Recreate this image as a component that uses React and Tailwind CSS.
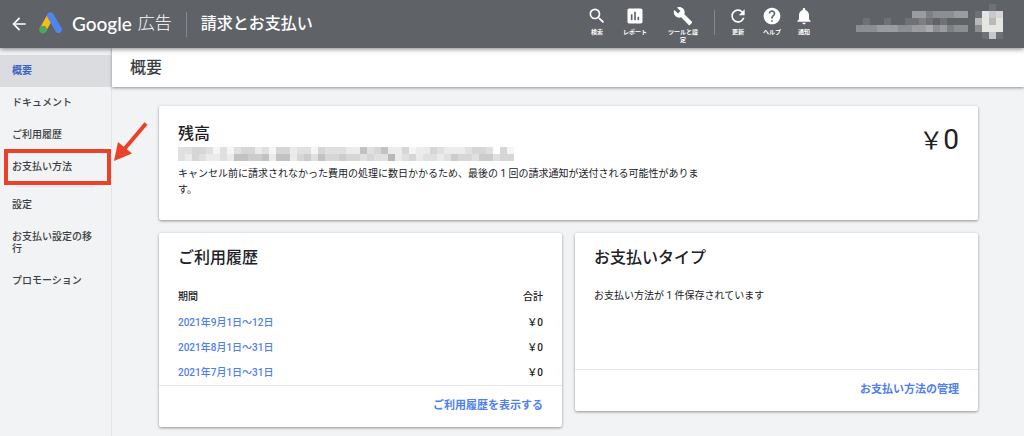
import {
  MdArrowBack,
  MdAssessment,
  MdBuild,
  MdHelp,
  MdNotifications,
  MdRefresh,
  MdSearch,
} from 'react-icons/md';

const tools = [
  { label: '検索', icon: MdSearch, width: 'w-9' },
  { label: 'レポート', icon: MdAssessment, width: 'w-10' },
  { label: 'ツールと設定', icon: MdBuild, width: 'w-14' },
];

const actions = [
  { label: '更新', icon: MdRefresh, width: 'w-9' },
  { label: 'ヘルプ', icon: MdHelp, width: 'w-8' },
  { label: '通知', icon: MdNotifications, width: 'w-8' },
];

// Full-width yen sign
const YEN = '\uffe5';

const history = [
  { period: '2021年9月1日〜12日', total: '0' },
  { period: '2021年8月1日〜31日', total: '0' },
  { period: '2021年7月1日〜31日', total: '0' },
];

// Each digit is the strength of one 7px cell of a masked text
const maskedAccount = [
  '334431313442314423314333226346224122432223443041',
  '324322326655626624536445443433723423323544355344',
];

const maskedUser = [
  '0000000000000000000100',
  '0000000044233344019780',
  '0100100112101000069690',
  '3334443344534233039990',
  '0000000000000000001710',
];

function AdsLogo() {
  return (
    <svg className="h-6 w-6" viewBox="0 0 24 24" aria-hidden="true">
      <path d="M3.9 17.6 11 5" stroke="#f9bc15" strokeWidth="7" />
      <path d="M11.4 3.8 19.4 17.5" stroke="#4f86ee" strokeWidth="6.8" strokeLinecap="round" />
      <circle cx="4" cy="17.6" r="3.8" fill="#4fa65a" />
    </svg>
  );
}

function Mosaic({ rows, color, strength, label }) {
  const width = rows[0].length * 7;
  const height = rows.length * 7;
  return (
    <svg width={width} height={height} role="img" aria-label={label} shapeRendering="crispEdges">
      {rows.map((row, y) =>
        [...row].map((level, x) => (
          <rect
            key={`${x}-${y}`}
            x={x * 7}
            y={y * 7}
            width="7"
            height="7"
            fill={color}
            fillOpacity={level * strength}
          />
        ))
      )}
    </svg>
  );
}

function ToolButton({ label, icon: Icon, width }) {
  return (
    <button type="button" className={`${width} flex flex-col items-center`}>
      <Icon className="h-5 w-5" />
      <span className="mt-0.5 w-8 text-center text-[6px] leading-[8px] font-bold">{label}</span>
    </button>
  );
}

function NavItem({ active, children }) {
  return (
    <a
      href="#"
      className={
        active
          ? 'block bg-[#dadce0] px-3 py-[10px] text-[10px] leading-3 font-bold text-[#3c66c4]'
          : 'block px-3 py-[10px] text-[10px] leading-3 font-medium text-[#3c4043]'
      }
    >
      {children}
    </a>
  );
}

function Card({ className = '', children }) {
  return (
    <section className={`rounded-xs bg-white shadow-[0_1px_3px_rgba(0,0,0,0.4)] ${className}`}>
      {children}
    </section>
  );
}

function CardFooter({ children }) {
  return (
    <div className="flex h-[42px] items-center justify-end border-t border-[#e4e6e9] px-[19px]">
      <a href="#" className="text-[11px] font-bold text-[#4f80ee]">
        {children}
      </a>
    </div>
  );
}

export default function App() {
  return (
    <div className="flex min-h-screen flex-col bg-[#f1f3f4] font-[Roboto,'Noto_Sans_CJK_JP',sans-serif] text-[#202124]">
      <header className="relative z-10 flex h-12 items-center bg-[#5f6368] text-white shadow-[0_1px_5px_rgba(0,0,0,0.5)]">
        <button type="button" aria-label="戻る" className="ml-[9px]">
          <MdArrowBack className="h-5 w-5" />
        </button>
        <div className="ml-[10px] flex items-center">
          <AdsLogo />
          <span className="ml-[9px] font-[Lato,sans-serif] text-[19px] font-medium">Google</span>
          <span className="ml-[6px] text-[17px] font-light">広告</span>
        </div>
        <div className="ml-[14px] h-[25px] w-px bg-[#85898d]" />
        <h1 className="ml-[14px] text-base font-medium">請求とお支払い</h1>

        <div className="ml-auto flex h-full items-start pt-[6px]">
          <div className="flex">
            {tools.map((tool) => (
              <ToolButton key={tool.label} {...tool} />
            ))}
          </div>
          <div className="mt-1 ml-[3px] h-[25px] w-px bg-[#85898d]" />
          <div className="ml-[5px] flex">
            {actions.map((action) => (
              <ToolButton key={action.label} {...action} />
            ))}
          </div>
        </div>
        <div className="mt-1 mr-[14px] ml-9 self-start">
          <Mosaic rows={maskedUser} color="#f4f3f0" strength={0.1} label="アカウント" />
        </div>
      </header>

      <div className="flex flex-1">
        <nav className="w-28 shrink-0 border-r border-[#e2e4e7] pt-[7px]">
          <NavItem active>概要</NavItem>
          <NavItem>ドキュメント</NavItem>
          <NavItem>ご利用履歴</NavItem>
          <div className="relative">
            <NavItem>お支払い方法</NavItem>
            <div className="pointer-events-none absolute -top-0.5 right-0 -bottom-0.5 left-1 border-4 border-[#ea4228]" />
            <svg
              className="pointer-events-none absolute -top-8 left-full h-11 w-10"
              viewBox="112 118 40 44"
              aria-hidden="true"
            >
              <path d="M147 122.5 125 148.5" stroke="#ea4228" strokeWidth="4" />
              <path d="M115 160 119 141 133 152.5Z" fill="#ea4228" />
            </svg>
          </div>
          <hr className="mx-4 mt-[3px] mb-[2px] border-[#dfe1e4]" />
          <NavItem>設定</NavItem>
          <NavItem>お支払い設定の移行</NavItem>
          <NavItem>プロモーション</NavItem>
        </nav>

        <main className="min-w-0 flex-1">
          <div className="flex h-[39px] items-center bg-white px-[18px] shadow-[0_1px_3px_rgba(0,0,0,0.4)]">
            <h2 className="text-base font-medium text-[#3c4043]">概要</h2>
          </div>

          <div className="pt-[19px] pr-[46px] pl-[47px]">
            <Card className="flex items-start justify-between px-[19px] pt-4 pb-[22px]">
              <div>
                <h3 className="text-base leading-6 font-medium">残高</h3>
                <div className="mt-px flex h-[14px]">
                  <Mosaic rows={maskedAccount} color="#000000" strength={0.04} label="請求先アカウント" />
                </div>
                <p className="mt-[5px] max-w-[530px] text-[10px] leading-4">
                  キャンセル前に請求されなかった費用の処理に数日かかるため、最後の 1 回の請求通知が送付される可能性があります。
                </p>
              </div>
              <p className="text-[28px] leading-9">
                <span className="text-[24px]">{YEN}</span>0
              </p>
            </Card>

            <div className="mt-[13px] grid grid-cols-2 items-start gap-[13px]">
              <Card>
                <h3 className="px-[19px] pt-[13px] text-base leading-6 font-medium">ご利用履歴</h3>
                <table className="mt-[14px] w-full text-[10px] leading-3 font-medium">
                  <thead>
                    <tr className="h-[26px]">
                      <th className="pl-[19px] text-left font-medium">期間</th>
                      <th className="pr-[19px] text-right font-medium">合計</th>
                    </tr>
                  </thead>
                  <tbody>
                    {history.map((row) => (
                      <tr key={row.period} className="h-[25px]">
                        <td className="pl-[19px]">
                          <a href="#" className="text-[#4f80ee]">
                            {row.period}
                          </a>
                        </td>
                        <td className="pr-[19px] text-right">
                          {YEN}
                          {row.total}
                        </td>
                      </tr>
                    ))}
                  </tbody>
                </table>
                <CardFooter>ご利用履歴を表示する</CardFooter>
              </Card>

              <Card>
                <h3 className="px-[19px] pt-[13px] text-base leading-6 font-medium">お支払いタイプ</h3>
                <p className="mt-[18px] h-[81px] px-[19px] text-[10px] leading-4">
                  お支払い方法が 1 件保存されています
                </p>
                <CardFooter>お支払い方法の管理</CardFooter>
              </Card>
            </div>
          </div>
        </main>
      </div>
    </div>
  );
}
